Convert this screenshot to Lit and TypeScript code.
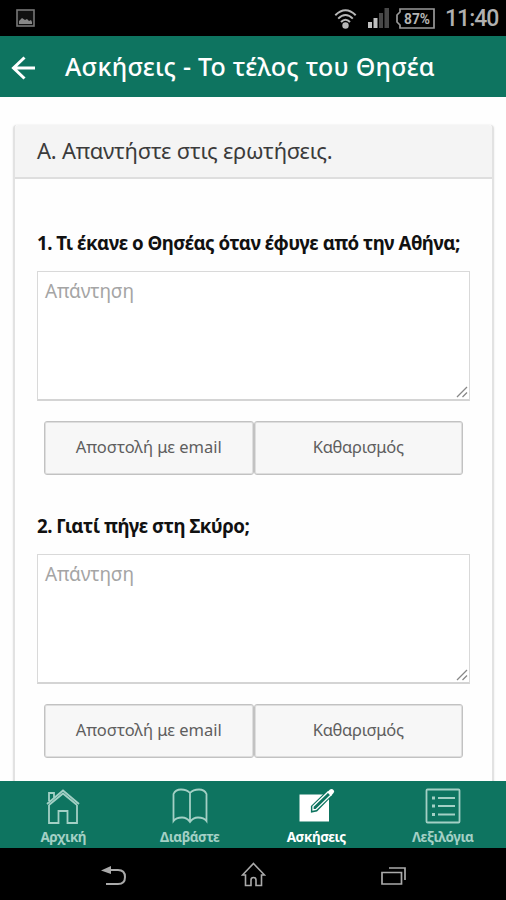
import { LitElement, html, svg, css } from "lit";
import { customElement, property } from "lit/decorators.js";
import { classMap } from "lit/directives/class-map.js";

@customElement("status-bar")
class StatusBar extends LitElement {
  static styles = css`
    :host { display: flex; height: 36px; background: #000; flex: none; align-items: center; justify-content: space-between; }
    svg { display: block; }
    .left { padding-left: 16px; }
    .right { display: flex; align-items: center; padding-right: 7px; }
    .wifi { margin-right: 11px; margin-top: 2px; }
    .signal { margin-right: 7px; }
    .battery { margin-right: 10px; }
    .pct { font: bold 15px Roboto, sans-serif; fill: #b4b4b4; }
    .clock { font: 500 23px/36px Roboto, sans-serif; color: #b0b0b0; letter-spacing: -1px; width: 54px; white-space: nowrap; padding-top: 2px; }
  `;
  render() {
    return html`
      <svg class="left" width="19" height="18" viewBox="0 0 19 18">
        <rect x="1" y="1" width="17" height="16" fill="#111" stroke="#777" stroke-width="1.6" />
        <path d="M3 15V12l3-3 3 2 2-1 2 2 2-1 1 2v2z" fill="#888" />
      </svg>
      <div class="right">
        <svg class="wifi" width="23" height="23" viewBox="0 0 23 23" fill="none" stroke="#b8b8b8" stroke-width="2">
          <path d="M1.3 7.2Q11.5-2.6 21.7 7.2M4.2 10.6Q11.5 3.4 18.8 10.6M7 14Q11.5 9.4 16 14" />
          <circle cx="11.5" cy="17.500" r="3.2" fill="#b8b8b8" stroke="none" />
        </svg>
        <svg class="signal" width="21" height="20" viewBox="0 0 21 20">
          <path d="M0 14h4v6H0zM5.500 10h4v10h-4z" fill="#c0c0c0" />
          <path d="M11 5h4v15h-4zM16.500 0h4.500v20h-4.500z" fill="#484848" />
        </svg>
        <svg class="battery" width="39" height="21" viewBox="0 0 39 21">
          <path d="M4 1H38V20H4V17L1 14V7L4 4Z" fill="none" stroke="#999" stroke-width="1.700" />
          <text class="pct" x="8" y="16" textLength="26" lengthAdjust="spacingAndGlyphs">87%</text>
        </svg>
        <div class="clock">11:40</div>
      </div>
    `;
  }
}

@customElement("exercise-question")
class ExerciseQuestion extends LitElement {
  @property() text = "";
  static styles = css`
    :host { display: block; padding-bottom: 39px; }
    .question { height: 40px; font: bold 18.700px/24px "Noto Sans", sans-serif; letter-spacing: -0.5px; color: #111; white-space: nowrap; }
    .answer { box-sizing: border-box; height: 130px; border: 1px solid #d9d9d9; border-bottom: 2px solid #d4d4d4; padding: 7px; background: #fff; display: flex; justify-content: space-between; color: #a5a5a5; font: 19px/25px "Noto Sans", sans-serif; letter-spacing: -0.15px; }
    .grip { align-self: flex-end; margin: 0 -6px -6px 0; display: block; }
    .actions { display: flex; padding: 20px 7px 0; }
    .action { flex: 1; box-sizing: border-box; height: 54px; border: 1px solid #c2c2c2; box-shadow: inset 0 0 0 1px #dedede; border-radius: 3px; background: #f7f7f7; text-align: center; font: 16.500px/50px "Noto Sans", sans-serif; color: #5e5e5e; white-space: nowrap; }
    .clear { letter-spacing: -0.3px; }
  `;
  render() {
    return html`
      <div class="question">${this.text}</div>
      <div class="answer">
        <span>Απάντηση</span>
        <svg class="grip" width="12" height="12" viewBox="0 0 12 12" stroke="#888" stroke-width="1.300"><path d="M1 11L11 1M6.500 11L11 6.500" /></svg>
      </div>
      <div class="actions">
        <div class="action">Αποστολή με email</div>
        <div class="action clear">Καθαρισμός</div>
      </div>
    `;
  }
}

const tabs = [
  {
    label: "Αρχική",
    icon: svg`<path d="M2 16L18 2.500 34 16M4 13V5h5v4.500M4 17V35H13.500V23H22.500V35H32V17" /><path d="M4 17L18 5.500 32 17" />`,
  },
  {
    label: "Διαβάστε",
    icon: svg`<path d="M18 5Q15 1.500 9 1.500Q3.500 1.500 1.500 6V33Q4 29.500 10 29.500Q15 29.500 18 34Q21 29.500 26 29.500Q32 29.500 34.500 33V6Q32.500 1.500 27 1.500Q21 1.500 18 5V34" />`,
  },
  {
    label: "Ασκήσεις",
    active: true,
    icon: svg`<path d="M1.500 6.500H31V33.500H1.500Z" fill="#fff" stroke="none" /><path d="M14 18.500L30.500 2.500 34.500 6 18.500 22.500 14 23.500Z" fill="#0e7460" stroke="#0e7460" stroke-width="2.200" /><path d="M15 18.500L30 4 33 7 18 21.500 15 22Z" fill="#0e7460" stroke="#fff" stroke-width="1.300" /><path d="M29.500 4L32 1.500Q34 0.500 35.500 2T35.500 5L33 8Z" fill="#fff" stroke="none" />`,
  },
  {
    label: "Λεξιλόγια",
    icon: svg`<rect x="1.500" y="1.500" width="33" height="33" rx="1" /><path d="M13 10H30M13 18H30M13 26.500H30" /><path d="M7 10H10M7 18H10M7 26.500H10" stroke-width="3" />`,
  },
];

@customElement("tab-bar")
class TabBar extends LitElement {
  static styles = css`
    :host { display: flex; height: 67px; background: #0e7460; flex: none; }
    .tab { flex: 1; display: flex; flex-direction: column; align-items: center; padding-top: 7px; color: #a3d0c5; font: bold 13.500px/20px "Noto Sans", sans-serif; letter-spacing: -0.45px; white-space: nowrap; }
    .active { color: #fff; }
    svg { display: block; overflow: visible; margin-bottom: 3px; }
  `;
  render() {
    return tabs.map(
      (t) => html`<div class=${classMap({ tab: true, active: !!t.active })}>
        <svg width="36" height="36" viewBox="0 0 36 36" fill="none" stroke="currentColor" stroke-width="1.800">${t.icon}</svg>
        <span>${t.label}</span>
      </div>`,
    );
  }
}

@customElement("app-root")
class AppRoot extends LitElement {
  static styles = css`
    :host { display: flex; flex-direction: column; height: 900px; overflow: hidden; background: #fefefe; }
    .header { flex: none; box-sizing: border-box; height: 61px; background: #0e7460; display: flex; align-items: center; padding-left: 11px; color: #fff; font: 500 25px/60px "Noto Sans", sans-serif; white-space: nowrap; }
    .back { margin-right: 29px; margin-top: 3px; }
    .title { letter-spacing: 0.24px; margin-top: -2px; }
    .content { flex: 1; min-height: 0; overflow: hidden; padding: 28px 12px 0 13px; }
    .card { border: 2px solid #e2e2e2; border-top: 0; border-radius: 4px; height: 760px; box-shadow: 0 0 2px #e4e4e4; }
    .card-title { box-sizing: border-box; height: 54px; border-bottom: 2px solid #dedede; background: #f4f4f4; padding-left: 22px; font: 22px/51px "Noto Sans", sans-serif; letter-spacing: -0.25px; color: #3b3b3b; border-radius: 4px 4px 0 0; white-space: nowrap; }
    .questions { padding: 52px 22px 0 22px; }
    .nav { flex: none; height: 52px; background: #000; display: grid; grid-template-columns: 1fr 1fr 1fr; padding: 4px 43px 0; align-items: center; justify-items: center; box-sizing: border-box; }
    svg { display: block; }
    .home { margin-bottom: 3px; }
  `;
  render() {
    return html`
      <status-bar></status-bar>
      <div class="header">
        <svg class="back" width="25" height="24" viewBox="0 0 25 24" fill="none" stroke="#fff" stroke-width="3"><path d="M24 12H2.500M13.500 1.500L2.500 12L13.500 22.500" /></svg>
        <span class="title">Ασκήσεις - Το τέλος του Θησέα</span>
      </div>
      <div class="content">
        <div class="card">
          <div class="card-title">Α. Απαντήστε στις ερωτήσεις.</div>
          <div class="questions">
            <exercise-question text="1. Τι έκανε ο Θησέας όταν έφυγε από την Αθήνα;"></exercise-question>
            <exercise-question text="2. Γιατί πήγε στη Σκύρο;"></exercise-question>
          </div>
        </div>
      </div>
      <tab-bar></tab-bar>
      <div class="nav">
        <svg width="25" height="20" viewBox="0 0 25 20" fill="none" stroke="#aaa" stroke-width="2"><path d="M8 4H17Q24 4 24 11T17 18H5" /><path d="M0 4.500L10 0V8Z" fill="#aaa" stroke="none" /></svg>
        <svg class="home" width="25" height="25" viewBox="0 0 25 25" fill="none" stroke="#aaa" stroke-width="1.600"><path d="M12.500 1.500L23.500 13H20.500V23.500H15V18Q15 15.500 12.500 15.500T10 18V23.500H4.500V13H1.500Z" /></svg>
        <svg width="25" height="18" viewBox="0 0 25 18" fill="none" stroke="#aaa" stroke-width="1.700"><path d="M1 5.500H20.500V17H1ZM8 1H24V13" /></svg>
      </div>
    `;
  }
}
